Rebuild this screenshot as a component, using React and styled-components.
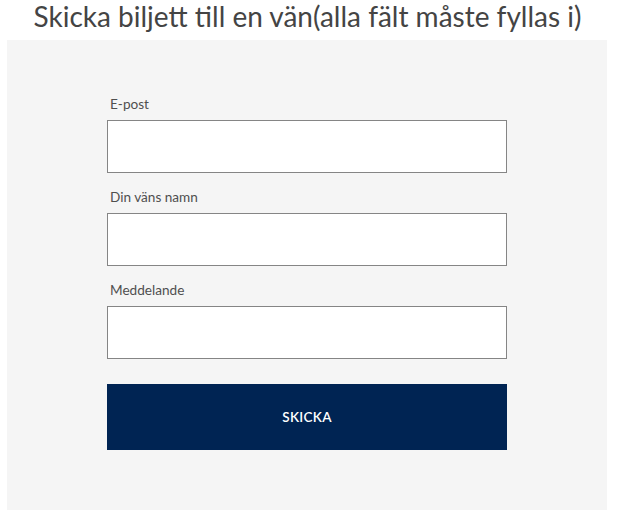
import React from "react";
import styled, { createGlobalStyle } from "styled-components";

const GlobalStyle = createGlobalStyle`
  body {
    margin: 0;
    background: #fff;
    font-family: Lato, "Open Sans", sans-serif;
  }
`;

const Page = styled.div`
  width: 619px;
`;

const Title = styled.h1`
  margin: 0 0 8px;
  padding-right: 4px;
  font-size: 28px;
  font-weight: 400;
  line-height: 32px;
  color: #444;
  text-align: center;
  white-space: nowrap;
`;

const Panel = styled.form`
  margin-left: 7px;
  width: 600px;
  height: 470px;
  box-sizing: border-box;
  background: #f5f5f5;
  padding: 56px 100px 0;
  display: flex;
  flex-direction: column;
`;

const Field = styled.div`
  display: flex;
  flex-direction: column;
  margin-bottom: 16px;
`;

const Label = styled.label`
  font-size: 13.6px;
  line-height: 16px;
  color: #4f4f4f;
  padding-left: 3px;
  margin-bottom: 8px;
`;

const Input = styled.input`
  box-sizing: border-box;
  width: 400px;
  height: 53px;
  border: 1px solid #858585;
  background: #fff;
  margin: 0;
  padding: 0 10px;
  font: inherit;
`;

const Button = styled.button`
  margin-top: 9px;
  width: 400px;
  height: 66px;
  border: 0;
  background: #002453;
  color: #fff;
  font-family: Lato, sans-serif;
  font-size: 13.5px;
  font-weight: 600;
  letter-spacing: 0.3px;
  cursor: pointer;
`;

const fields = [
  { id: "email", label: "E-post" },
  { id: "name", label: "Din väns namn" },
  { id: "message", label: "Meddelande" },
];

export default function App() {
  return (
    <Page>
      <GlobalStyle />
      <Title>Skicka biljett till en vän(alla fält måste fyllas i)</Title>
      <Panel onSubmit={(e) => e.preventDefault()}>
        {fields.map((f) => (
          <Field key={f.id}>
            <Label htmlFor={f.id}>{f.label}</Label>
            <Input id={f.id} />
          </Field>
        ))}
        <Button type="submit">SKICKA</Button>
      </Panel>
    </Page>
  );
}
